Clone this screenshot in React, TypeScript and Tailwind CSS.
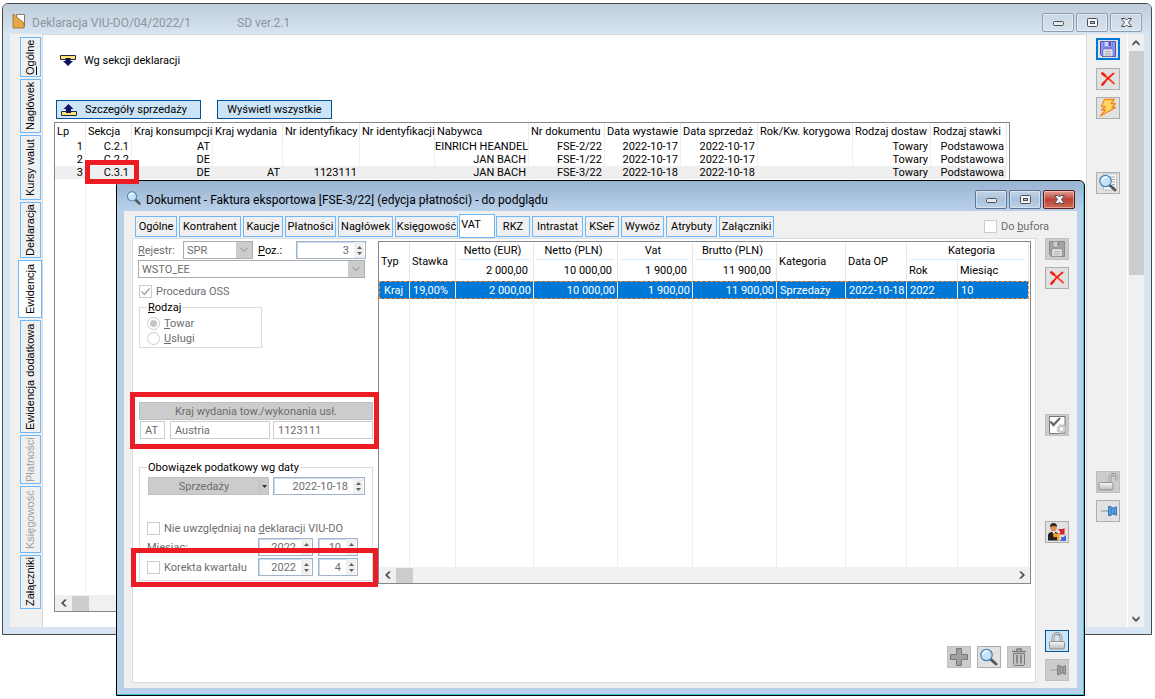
import { useState } from 'react'
import type { ReactNode } from 'react'
import clsx from 'clsx'

/* ---------- icons ---------- */

function SaveIcon({ gray }: { gray?: boolean }) {
    const dark = gray ? '#8a8a8a' : '#4f55b5'
    const mid = gray ? '#a3a3a3' : '#8f95ee'
    return (
        <svg className="h-[18px] w-[18px] shrink-0" viewBox="0 0 18 18" aria-hidden="true">
            <path d="M1.5 1.5h15v15h-13l-2-2z" fill={mid} stroke={dark} />
            <path d="M5 1.5h8v5.500h-8z" fill={gray ? '#d0d0d0' : '#c6d8ff'} stroke={dark} strokeWidth=".7" />
            <path d="M9.500 2h2.500v4h-2.500z" fill={dark} />
            <path d="M4 9h10v7.500h-10z" fill="#f7f7f7" stroke={dark} strokeWidth=".7" />
            <path d="M5.500 11.300h7M5.500 13.200h7M5.500 15h7" stroke="#9a9aa8" strokeWidth=".9" />
        </svg>
    )
}

function CancelIcon() {
    return (
        <svg className="h-[18px] w-[18px]" viewBox="0 0 18 18" aria-hidden="true">
            <path d="M3 3.500C7 6 11 10 15 13.500" stroke="#ff3d1f" strokeWidth="1.800" fill="none" strokeLinecap="round" />
            <path d="M14.500 3.500C11 6 7 10 3.500 14.500" stroke="#f01f10" strokeWidth="1.800" fill="none" strokeLinecap="round" />
            <path d="M3.500 3.500l2.500 2M3.500 14.500l1.800-2" stroke="#f01f10" strokeWidth="2.600" strokeLinecap="round" />
        </svg>
    )
}

function BoltIcon() {
    return (
        <svg className="h-5 w-5" viewBox="0 0 20 20" aria-hidden="true">
            <path
                d="M6.500 1.500h10l-3.500 4h4.500l-3.500 4h3.500L2.500 18l5-6H3.500l4-3.500H3.500z"
                fill="#ffd766"
                stroke="#f58a1d"
                strokeWidth="1.300"
                strokeLinejoin="round"
            />
        </svg>
    )
}

function LensIcon({ page, className = 'h-5 w-5' }: { page?: boolean; className?: string }) {
    return (
        <svg className={className} viewBox="0 0 20 20" aria-hidden="true">
            {page && (
                <>
                    <path d="M5.500 1h13v16h-13z" fill="#fafafa" stroke="#b5b5b5" strokeWidth=".8" />
                    <path d="M12 4h5M14 6.500h3M14 9h3M14 11.500h3M14 14h3" stroke="#a5a5a5" />
                </>
            )}
            <path d="M12 12.500l5 4.500" stroke="#555" strokeWidth="3" strokeLinecap="round" />
            <circle cx="7.500" cy="8" r="5.700" fill="#c5e4fa" stroke="#4d86b3" strokeWidth="1.300" />
            <path d="M4 7.500a3.700 3.700 0 0 1 5-3" stroke="#fff" strokeWidth="1.400" fill="none" />
        </svg>
    )
}

function LockIcon({ open }: { open?: boolean }) {
    const shackle = open ? 'M12 11V6a3.500 3.500 0 0 1 7 0v3' : 'M6 11V6.500a4 4 0 0 1 8 0V11'
    return (
        <svg className="h-5 w-5" viewBox="0 0 20 20" aria-hidden="true">
            <defs>
                <linearGradient id="metal" x1="0" y1="0" x2="0" y2="1">
                    <stop offset="0" stopColor="#fafafa" />
                    <stop offset="1" stopColor="#b9b9b9" />
                </linearGradient>
            </defs>
            <path d={shackle} fill="none" stroke="#8b8b8b" strokeWidth="2.800" />
            <path d={shackle} fill="none" stroke="#dedede" strokeWidth="1.200" />
            <rect x={open ? 1 : 2.5} y="10.500" width={open ? 14 : 15} height="7.500" rx="1.300" fill="url(#metal)" stroke="#8b8b8b" strokeWidth=".9" />
        </svg>
    )
}

function PinIcon({ gray }: { gray?: boolean }) {
    const dark = gray ? '#777' : '#2c6cb0'
    return (
        <svg className="h-5 w-5" viewBox="0 0 20 20" aria-hidden="true">
            <path d="M3 10h8" stroke={gray ? '#aaa' : '#9aa5ad'} strokeWidth="1.200" />
            <path d="M10.500 5.500h2.500l1 1.500h2l1-1h1.500v8h-1.500l-1-1h-2l-1 1.500h-2.500z" fill={gray ? '#a5a5a5' : '#5ba3e6'} stroke={dark} strokeWidth=".9" />
            <path d="M13 7v6M16 7v6" stroke={dark} strokeWidth=".8" />
        </svg>
    )
}

function CheckPageIcon() {
    return (
        <svg className="h-5 w-5" viewBox="0 0 20 20" aria-hidden="true">
            <path d="M2.500 1.500h15.500v17h-15.500z" fill="#fff" stroke="#777" />
            <path d="M3.500 6.500l3 3.500 6.500-7" fill="none" stroke="#666" strokeWidth="2.200" />
            <circle cx="14.500" cy="14" r="4" fill="#cfcfcf" stroke="#c2c2c2" strokeWidth="2.200" strokeDasharray="2 1.200" />
            <circle cx="14.500" cy="14" r="1.700" fill="#fff" />
        </svg>
    )
}

function PersonSwapIcon() {
    return (
        <svg className="h-5 w-5" viewBox="0 0 20 20" aria-hidden="true">
            <path d="M1 18.500v-5q0-3 3.500-3.500h4q3 .5 3 3.500v5z" fill="#25201f" />
            <path d="M5.500 10h2.500l-1 5z" fill="#fff" />
            <path d="M6.500 11h1l.3 5h-1.500z" fill="#c33" />
            <circle cx="6.500" cy="6" r="3.200" fill="#d98f5c" />
            <path d="M3 5q0-4 3.500-4t3.500 4q-2-2-7 0z" fill="#33251e" />
            <path d="M11 7h5l1.500-1v6.500h-5.500l1.500-2.500z" fill="#da1f1f" />
            <path d="M19 13v6h-6.500l2-2-1-2h3z" fill="#4469d4" />
            <path d="M6.500 12.500l3-2v1.500h3v6h-2.500v-3h-3z" fill="#f3a51d" />
        </svg>
    )
}

function PlusIcon() {
    return (
        <svg className="h-5 w-5" viewBox="0 0 20 20" aria-hidden="true">
            <path d="M7.500 1.500h5v6h6v5h-6v6h-5v-6h-6v-5h6z" fill="#a0a0a0" stroke="#777" />
        </svg>
    )
}

function TrashIcon() {
    return (
        <svg className="h-5 w-5" viewBox="0 0 20 20" aria-hidden="true">
            <path d="M4.500 6.500h11v11l-1 1h-9l-1-1z" fill="#c2c2c2" stroke="#7b7b7b" />
            <path d="M3 4.500h14M8 4v-2h4v2" fill="none" stroke="#7b7b7b" strokeWidth="1.600" />
            <path d="M8 8v8.500M12 8v8.500" stroke="#777" strokeWidth="1.500" />
        </svg>
    )
}

function TableArrow({ up }: { up?: boolean }) {
    return (
        <svg className="h-3 w-4 shrink-0" viewBox="0 0 16 12" aria-hidden="true">
            {up ? (
                <>
                    <path d="M.5 7.500h15v4h-15z" fill="#ffe36e" stroke="#222a4a" />
                    <path d="M7.500 0l5 5h-2.500v4h-5v-4h-2.500z" fill="#14125f" />
                </>
            ) : (
                <>
                    <path d="M.5 1.500h15v4h-15z" fill="#ffe36e" stroke="#222a4a" />
                    <path d="M5.500 4h5v3h2.500l-5 5-5-5h2.500z" fill="#14125f" />
                </>
            )}
        </svg>
    )
}

function Chevron({ dir, color = '#505050' }: { dir: 'up' | 'down' | 'left' | 'right'; color?: string }) {
    const paths = {
        up: 'M1.500 5.500L5 2l3.500 3.500v2.500L5 4.500 1.500 8z',
        down: 'M1.500 4.500L5 8l3.500-3.500V2L5 5.500 1.500 2z',
        left: 'M5.500 1.500L2 5l3.500 3.500h2.500L4.500 5 8 1.500z',
        right: 'M4.500 1.500L8 5l-3.500 3.500H2L5.500 5 2 1.500z',
    }
    return (
        <svg className="h-[10px] w-[10px]" viewBox="0 0 10 10" aria-hidden="true">
            <path d={paths[dir]} fill={color} />
        </svg>
    )
}

/* ---------- controls ---------- */

function WindowButtons({ active }: { active?: boolean }) {
    const base = 'flex h-[19px] w-8 items-center justify-center rounded-[2px] border inset-shadow-[0_0_0_1px_rgba(255,255,255,0.4)]'
    const normal = active
        ? 'border-[#5f7590] bg-linear-to-b from-[#c3d5e8] via-[#a9c1dc] to-[#bcd3ea]'
        : 'border-[#8d9db4] bg-linear-to-b from-[#cbd7e3] to-[#d6e2ee]'
    return (
        <div className="flex gap-[2px]">
            <button type="button" aria-label="Minimalizuj" className={clsx(base, normal)}>
                <svg className="h-[11px] w-[13px]" viewBox="0 0 13 11"><rect x="1.500" y="4.500" width="10" height="4" rx="1" fill="#e8e8e8" stroke="#4b4e58" /></svg>
            </button>
            <button type="button" aria-label="Maksymalizuj" className={clsx(base, normal)}>
                <svg className="h-[11px] w-[13px]" viewBox="0 0 13 11">
                    <rect x="1.500" y="1.500" width="10" height="8" rx="1" fill="#f4f4f4" stroke="#4b4e58" />
                    <rect x="4.500" y="4.500" width="4" height="2" fill="#aebfd2" stroke="#4b4e58" />
                </svg>
            </button>
            <button type="button" aria-label="Zamknij" className={clsx(base, active ? 'border-[#5b1a1a] bg-linear-to-b from-[#e0a095] via-[#bd4232] to-[#cf6a52]' : normal)}>
                <svg className="h-[11px] w-[13px]" viewBox="0 0 13 11">
                    <path d="M1.500 1.500h3.500l1.500 1.500 1.500-1.500h3.500l-3 4 3 4h-3.500l-1.500-1.500-1.500 1.500h-3.500l3-4z" fill="#f4f4f4" stroke="#4b4e58" />
                </svg>
            </button>
        </div>
    )
}

const tones = {
    normal: 'border border-[#adadad] bg-[#e1e1e1]',
    disabled: 'border border-[#bfbfbf] bg-[#cccccc]',
    focus: 'border-2 border-[#0078d7] bg-[#e1e1e1]',
    hot: 'border border-[#005499] bg-[#cce4f7]',
}

function ToolButton({ label, children, className, tone = 'normal' }: { label: string; children: ReactNode; className?: string; tone?: keyof typeof tones }) {
    return (
        <button
            type="button"
            aria-label={label}
            disabled={tone === 'disabled'}
            className={clsx('flex h-[22px] w-6 shrink-0 items-center justify-center', tones[tone], className)}
        >
            {children}
        </button>
    )
}

function Combo({ id, value, className }: { id: string; value: string; className?: string }) {
    return (
        <span className={clsx('flex h-[18px] border border-[#acacac] bg-white', className)}>
            <select id={id} aria-label={id} disabled defaultValue={value} className="min-w-0 flex-1 appearance-none bg-white pl-[3px] text-[#6d6d6d] opacity-100">
                <option>{value}</option>
            </select>
            <span className="flex w-4 items-center justify-center bg-[#cccccc]">
                <svg className="h-2 w-[10px]" viewBox="0 0 10 8"><path d="M1.500 2L5 5.500 8.500 2" fill="none" stroke="#8c8c8c" /></svg>
            </span>
        </span>
    )
}

function Spin({ id, value, className }: { id: string; value: string; className?: string }) {
    return (
        <span className={clsx('flex h-[18px] border border-[#a5b3c7] bg-white inset-shadow-[1px_1px_0_#c5daf3]', className)}>
            <input id={id} aria-label={id} readOnly defaultValue={value} className="w-0 min-w-0 flex-1 bg-transparent pr-[5px] text-right text-[#6d6d6d] outline-none" />
            <span className="mr-px flex w-[10px] flex-col items-center justify-center gap-[3px] bg-[#f0f0f0]">
                <svg className="h-[3px] w-[5px]" viewBox="0 0 5 3"><path d="M2.500 0L5 3H0z" fill="#606060" /></svg>
                <svg className="h-[3px] w-[5px]" viewBox="0 0 5 3"><path d="M2.500 3L5 0H0z" fill="#606060" /></svg>
            </span>
        </span>
    )
}

function Check({ checked, children }: { checked?: boolean; children: ReactNode }) {
    return (
        <label className="flex items-center gap-1 text-[#6d6d6d]">
            <span className="grid shrink-0">
                <input type="checkbox" disabled defaultChecked={checked} className="col-start-1 row-start-1 h-[13px] w-[13px] appearance-none border border-[#cccccc] bg-white" />
                {checked && (
                    <svg className="col-start-1 row-start-1 h-[13px] w-[13px]" viewBox="0 0 13 13">
                        <path d="M2.500 6.500l3 3 5-6" fill="none" stroke="#a5a5a5" strokeWidth="1.500" />
                    </svg>
                )}
            </span>
            <span className="whitespace-nowrap">{children}</span>
        </label>
    )
}

function Radio({ checked, children }: { checked?: boolean; children: ReactNode }) {
    return (
        <label className="flex h-[15px] items-center gap-1 text-[#6d6d6d]">
            <span className="grid shrink-0">
                <input type="radio" name="rodzaj" disabled defaultChecked={checked} className="col-start-1 row-start-1 h-[13px] w-[13px] appearance-none rounded-full border border-[#cccccc] bg-white" />
                {checked && <span className="col-start-1 row-start-1 m-[3px] rounded-full bg-[#c4c4c4]" />}
            </span>
            <span>{children}</span>
        </label>
    )
}

/* ---------- declaration window ---------- */

const sideTabs = [
    { name: 'Ogólne', className: 'h-[40px]' },
    { name: 'Nagłówek', className: 'h-[54px]' },
    { name: 'Kursy walut', className: 'h-[65px]' },
    { name: 'Deklaracja', className: 'h-[56px]' },
    { name: 'Ewidencja', className: 'h-[58px]' },
    { name: 'Ewidencja dodatkowa', className: 'h-[113px]' },
    { name: 'Płatności', className: 'h-[49px]', disabled: true },
    { name: 'Księgowość', className: 'h-[67px]', disabled: true },
    { name: 'Załączniki', className: 'h-[54px]' },
]

const salesColumns = [
    { name: 'Lp', w: 'w-[31px]' },
    { name: 'Sekcja', w: 'w-[46px]' },
    { name: 'Kraj konsumpcji', w: 'w-[81px]' },
    { name: 'Kraj wydania', w: 'w-[70px]' },
    { name: 'Nr identyfikacy', w: 'w-[77px]' },
    { name: 'Nr identyfikacji', w: 'w-[75px]' },
    { name: 'Nabywca', w: 'w-[94px]' },
    { name: 'Nr dokumentu', w: 'w-[76px]' },
    { name: 'Data wystawie', w: 'w-[76px]' },
    { name: 'Data sprzedaż', w: 'w-[77px]' },
    { name: 'Rok/Kw. korygowa', w: 'w-[95px]' },
    { name: 'Rodzaj dostaw', w: 'w-[78px]' },
    { name: 'Rodzaj stawki', w: '' },
]

const salesRows = [
    ['1', 'C.2.1', 'AT', '', '', '', 'EINRICH HEANDEL', 'FSE-2/22', '2022-10-17', '2022-10-17', '', 'Towary', 'Podstawowa'],
    ['2', 'C.2.2', 'DE', '', '', '', 'JAN BACH', 'FSE-1/22', '2022-10-17', '2022-10-17', '', 'Towary', 'Podstawowa'],
    ['3', 'C.3.1', 'DE', 'AT', '1123111', '', 'JAN BACH', 'FSE-3/22', '2022-10-18', '2022-10-18', '', 'Towary', 'Podstawowa'],
]

function SalesTable() {
    return (
        <div className="mr-[76px] mt-[3px] flex min-h-0 flex-1 flex-col border border-[#828790]">
            <div className="min-h-0 flex-1 pr-[2px]">
                <table className="h-full w-full table-fixed border-separate border-spacing-0">
                    <thead>
                        <tr className="h-[17px]">
                            {salesColumns.map((c) => (
                                <th key={c.name} className={clsx('whitespace-nowrap border-r border-[#e8e8e8] p-0 pl-[2px] text-left font-normal', c.w)}>
                                    {c.name}
                                </th>
                            ))}
                        </tr>
                    </thead>
                    <tbody>
                        {salesRows.map((row, i) => (
                            <tr key={row[0]} className={clsx('h-[13px]', i === 2 && 'bg-[#efefef]')}>
                                {row.map((cell, j) => (
                                    <td key={j} className="whitespace-nowrap border-r border-[#efefef] p-0 pr-[2px] text-right">
                                        {cell}
                                    </td>
                                ))}
                            </tr>
                        ))}
                        <tr className="h-full">
                            {salesColumns.map((c) => (
                                <td key={c.name} className="border-r border-[#efefef] p-0" />
                            ))}
                        </tr>
                    </tbody>
                </table>
            </div>
            <div className="flex h-4 items-center bg-[#f0f0f0]">
                <span className="flex w-[17px] justify-center"><Chevron dir="left" /></span>
                <span className="h-[15px] w-[17px] bg-[#cdcdcd]" />
            </div>
        </div>
    )
}

function DeclarationWindow() {
    const [tab, setTab] = useState('Ewidencja')

    return (
        <section className="absolute top-[3px] right-[3px] bottom-16 left-[2px] flex flex-col rounded-t-[6px] border border-[#4a4a4a] bg-[#d7e4f2] px-[7px] pb-[7px]">
            <header className="-mx-[7px] flex h-[30px] shrink-0 items-center rounded-t-[5px] bg-linear-to-b from-[#bfcddb] to-[#d7e4f2] pr-[9px] pl-[9px] text-[12px] text-[#8e9499]">
                <svg className="mt-1 h-4 w-[14px]" viewBox="0 0 14 16" aria-hidden="true">
                    <path d="M4.500 1.500h8v12h-8z" fill="#fff" stroke="#8c7a60" />
                    <path d="M1 1l11 9v5H1z" fill="#e5a84a" stroke="#9a6a20" strokeWidth=".8" />
                </svg>
                <h1 className="mt-2 ml-[6px] w-[205px]">Deklaracja VIU-DO/04/2022/1</h1>
                <span className="mt-2 flex-1">SD ver.2.1</span>
                <div className="mt-[6px]"><WindowButtons /></div>
            </header>
            <div className="flex min-h-0 flex-1 bg-[#f0f0f0]">
                <nav className="flex w-8 flex-col items-end gap-[2px] pt-[3px] pr-px font-['Liberation_Sans',Arial,sans-serif]">
                    {sideTabs.map((t) => (
                        <button
                            key={t.name}
                            type="button"
                            disabled={t.disabled}
                            onClick={() => setTab(t.name)}
                            className={clsx(
                                'flex shrink-0 rotate-180 items-center justify-center border border-[#6bb8fb] whitespace-nowrap [writing-mode:vertical-rl]',
                                t.className,
                                tab === t.name ? '-my-px -mr-px w-6 bg-white' : 'w-[21px]',
                                t.disabled && 'text-[#a0a0a0]',
                            )}
                        >
                            {t.name === 'Ogólne' ? <span><u>O</u>gólne</span> : t.name}
                        </button>
                    ))}
                </nav>
                <main className="flex min-w-0 flex-1 flex-col border-x border-t border-[#d9d9d9] bg-white pt-[18px] pb-[15px] pl-[11px]">
                    <div className="flex h-[14px] items-center gap-2 pl-[6px]">
                        <TableArrow />
                        <span>Wg sekcji deklaracji</span>
                    </div>
                    <div className="mt-[33px] flex gap-4 pl-[2px]">
                        <button type="button" className="flex h-[19px] w-[145px] items-center gap-2 border border-[#005499] bg-[#cce4f7] pl-1">
                            <TableArrow up />
                            Szczegóły sprzedaży
                        </button>
                        <button type="button" className="h-[19px] w-[115px] border border-[#005499] bg-[#cce4f7]">Wyświetl wszystkie</button>
                    </div>
                    <SalesTable />
                </main>
                <aside className="flex w-[41px] flex-col items-end border-r border-white pt-1 pr-[7px]">
                    <ToolButton label="Zapisz" tone="focus"><SaveIcon /></ToolButton>
                    <ToolButton label="Anuluj" className="mt-2"><CancelIcon /></ToolButton>
                    <ToolButton label="Przelicz" className="mt-[7px]"><BoltIcon /></ToolButton>
                    <ToolButton label="Podgląd" className="mt-[53px]"><LensIcon page /></ToolButton>
                    <ToolButton label="Odblokuj" tone="disabled" className="mt-[277px]"><LockIcon open /></ToolButton>
                    <ToolButton label="Przypnij" className="mt-[7px]"><PinIcon /></ToolButton>
                </aside>
                <div className="flex w-4 flex-col items-center bg-[#f0f0f0]">
                    <span className="flex h-[17px] items-center"><Chevron dir="up" /></span>
                    <span className="h-56 w-[15px] bg-[#cdcdcd]" />
                    <span className="mt-auto flex h-[17px] items-center"><Chevron dir="down" /></span>
                </div>
            </div>
        </section>
    )
}

/* ---------- document window ---------- */

const documentTabs = [
    { name: 'Ogólne', w: 'w-[42px]' },
    { name: 'Kontrahent', w: 'w-[62px]' },
    { name: 'Kaucje', w: 'w-[40px]' },
    { name: 'Płatności', w: 'w-[51px]' },
    { name: 'Nagłówek', w: 'w-[55px]' },
    { name: 'Księgowość', w: 'w-[63px]' },
    { name: 'VAT', w: 'w-[36px]' },
    { name: 'RKZ', w: 'w-[34px]' },
    { name: 'Intrastat', w: 'w-[51px]' },
    { name: 'KSeF', w: 'w-[34px]' },
    { name: 'Wywóz', w: 'w-[43px]' },
    { name: 'Atrybuty', w: 'w-[51px]' },
    { name: 'Załączniki', w: 'w-[55px]' },
]

const amounts = [
    { name: 'Netto (EUR)', sum: '2 000,00' },
    { name: 'Netto (PLN)', sum: '10 000,00' },
    { name: 'Vat', sum: '1 900,00' },
    { name: 'Brutto (PLN)', sum: '11 900,00' },
]

const vatRow = ['Kraj', '19,00%', '2 000,00', '10 000,00', '1 900,00', '11 900,00', 'Sprzedaży', '2022-10-18', '2022', '10']

function VatTable() {
    const th = 'border-r border-[#e8e8e8] p-0 font-normal'
    return (
        <div className="mt-[2px] mr-1 flex h-[343px] min-w-0 flex-1 flex-col border border-[#828790] bg-white">
            <div className="min-h-0 flex-1 pr-px">
                <table className="h-full w-full table-fixed border-separate border-spacing-0">
                    <colgroup>
                        <col className="w-[31px]" />
                        <col className="w-[46px]" />
                        <col className="w-[78px]" />
                        <col className="w-[84px]" />
                        <col className="w-[75px]" />
                        <col className="w-[84px]" />
                        <col className="w-[69px]" />
                        <col className="w-[61px]" />
                        <col className="w-[51px]" />
                        <col />
                    </colgroup>
                    <thead>
                        <tr className="h-[19px]">
                            <th rowSpan={2} className={clsx(th, 'pl-[2px] text-left')}>Typ</th>
                            <th rowSpan={2} className={clsx(th, 'pl-[2px] text-left')}>Stawka</th>
                            {amounts.map((a) => (
                                <th key={a.name} className={clsx(th, 'px-[3px]')}>
                                    <div className="border-b border-[#d5e8fa] pr-1 pb-[2px]">{a.name}</div>
                                </th>
                            ))}
                            <th rowSpan={2} className={clsx(th, 'pl-[2px] text-left')}>Kategoria</th>
                            <th rowSpan={2} className={clsx(th, 'pl-[2px] text-left')}>Data OP</th>
                            <th colSpan={2} className={clsx(th, 'px-[3px]')}>
                                <div className="border-b border-[#d5e8fa] pb-[2px] pl-2">Kategoria</div>
                            </th>
                        </tr>
                        <tr className="h-5">
                            {amounts.map((a) => (
                                <th key={a.name} className={clsx(th, 'pr-[5px] pb-[2px] text-right')}>{a.sum}</th>
                            ))}
                            <th className={clsx(th, 'pb-[2px] pl-[2px] text-left')}>Rok</th>
                            <th className={clsx(th, 'pb-[2px] pl-[2px] text-left')}>Miesiąc</th>
                        </tr>
                    </thead>
                    <tbody>
                        <tr className="h-[18px] bg-[#0078d7] text-white outline outline-dashed -outline-offset-1 outline-[#ff8728]">
                            {vatRow.map((cell, i) => (
                                <td key={i} className={clsx('whitespace-nowrap border-r border-[#efefef] p-0', i > 1 && i < 6 ? 'pr-[2px] text-right' : i === 0 ? 'pl-[5px]' : 'pl-[3px]')}>
                                    {cell}
                                </td>
                            ))}
                        </tr>
                        <tr className="h-full">
                            {vatRow.map((_, i) => (
                                <td key={i} className="border-r border-[#efefef] p-0" />
                            ))}
                        </tr>
                    </tbody>
                </table>
            </div>
            <div className="flex h-4 items-center bg-[#f0f0f0]">
                <span className="flex w-[17px] justify-center"><Chevron dir="left" /></span>
                <span className="h-[15px] w-[17px] bg-[#cdcdcd]" />
                <span className="ml-auto flex w-[17px] justify-center"><Chevron dir="right" /></span>
            </div>
        </div>
    )
}

function VatForm() {
    const field = 'h-[18px] min-w-0 border border-[#cccccc] bg-white px-1 text-[#6d6d6d]'
    return (
        <form className="w-[245px] shrink-0 pt-[2px] pl-[5px]">
            <div className="flex h-[18px] items-center">
                <label htmlFor="rejestr" className="w-[45px] text-[#6d6d6d]"><u>R</u>ejestr:</label>
                <Combo id="rejestr" value="SPR" className="w-[70px]" />
                <label htmlFor="poz" className="w-[43px] pl-[5px]"><u>P</u>oz.:</label>
                <Spin id="poz" value="3" className="w-[70px]" />
            </div>
            <div className="mt-px flex">
                <Combo id="rodzaj-transakcji" value="WSTO_EE" className="w-[227px]" />
            </div>
            <div className="mt-[7px] pl-px">
                <Check checked>Procedura OSS</Check>
            </div>
            <fieldset className="mt-[3px] ml-px h-[47px] w-[123px] border border-[#dcdcdc] pl-[7px]">
                <legend className="px-px"><u>R</u>odzaj</legend>
                <div className="pt-[2px]">
                    <Radio checked><u>T</u>owar</Radio>
                    <Radio><u>U</u>sługi</Radio>
                </div>
            </fieldset>
            <div className="mt-[54px] mr-[5px] ml-px">
                <button type="button" disabled className="h-[18px] w-full border border-[#bfbfbf] bg-[#cccccc] text-[#6d6d6d]">Kraj wydania tow./wykonania usł.</button>
                <div className="mt-px flex pl-px">
                    <input aria-label="Kod kraju" readOnly defaultValue="AT" className={clsx(field, 'w-[25px]')} />
                    <input aria-label="Kraj" readOnly defaultValue="Austria" className={clsx(field, 'ml-[5px] w-[100px]')} />
                    <input aria-label="Numer" readOnly defaultValue="1123111" className={clsx(field, 'ml-[3px] flex-1')} />
                </div>
            </div>
            <fieldset className="mt-[22px] mr-[6px] ml-px h-[120px] border border-[#dcdcdc] px-[7px]">
                <legend className="px-px">Obowiązek podatkowy wg daty</legend>
                <div className="mt-[3px] flex pl-px">
                    <button type="button" disabled className="h-[18px] w-[112px] border border-[#bfbfbf] bg-[#cccccc] text-[#6d6d6d]">Sprzedaży</button>
                    <button type="button" disabled aria-label="Rozwiń" className="flex h-[18px] w-[9px] items-center justify-center border-y border-r border-[#bfbfbf] bg-[#cccccc]">
                        <svg className="h-[3px] w-[5px]" viewBox="0 0 5 3"><path d="M0 0h5L2.500 3z" fill="#333" /></svg>
                    </button>
                    <Spin id="data" value="2022-10-18" className="ml-1 w-[92px]" />
                </div>
                <div className="mt-[27px]"><Check>Nie uwzględniaj na <u>d</u>eklaracji VIU-DO</Check></div>
                <div className="mt-[3px] flex items-center">
                    <label htmlFor="rok" className="w-[111px] text-[#6d6d6d]">Miesiąc:</label>
                    <Spin id="rok" value="2022" className="w-[55px]" />
                    <Spin id="miesiac" value="10" className="ml-[5px] w-[40px]" />
                </div>
                <div className="mt-[2px] flex items-center">
                    <div className="w-[111px]"><Check>Korekta kwartału</Check></div>
                    <Spin id="rok-korekty" value="2022" className="w-[55px]" />
                    <Spin id="kwartal" value="4" className="ml-[5px] w-[40px]" />
                </div>
            </fieldset>
        </form>
    )
}

function DocumentWindow() {
    const [tab, setTab] = useState('VAT')

    return (
        <section className="absolute top-[180px] right-[70px] bottom-[3px] left-[116px] flex flex-col rounded-t-[6px] border border-black bg-[#b9d1ea] px-[7px] pb-[7px] inset-shadow-[-1px_-1px_0_#3fc1d8]">
            <header className="-ml-[7px] -mr-[6px] flex h-[30px] shrink-0 items-center rounded-t-[5px] bg-linear-to-b from-[#99b4d1] to-[#b9d1ea] pr-[8px] pl-[9px] text-[12px]">
                <LensIcon className="mt-1 h-4 w-4" />
                <h2 className="mt-2 ml-1 flex-1 truncate">Dokument - Faktura eksportowa [FSE-3/22] (edycja płatności) - do podglądu</h2>
                <div className="mt-[6px]"><WindowButtons active /></div>
            </header>
            <div className="flex min-h-0 flex-1 bg-[#f0f0f0] pb-[5px] pl-2">
                <div className="flex min-w-0 flex-1 flex-col">
                    <nav className="flex h-[27px] items-center gap-[2px] pt-[4px] pb-px pl-[3px]">
                        {documentTabs.map((t) => (
                            <button
                                key={t.name}
                                type="button"
                                onClick={() => setTab(t.name)}
                                className={clsx(
                                    'shrink-0 border border-[#6bb8fb] whitespace-nowrap',
                                    t.w,
                                    tab === t.name ? '-mx-px h-6 bg-white pr-3 pb-1' : 'h-[21px]',
                                )}
                            >
                                {t.name}
                            </button>
                        ))}
                    </nav>
                    <div className="flex min-h-0 flex-1 flex-col border border-[#dcdcdc] bg-white">
                        <div className="flex">
                            <VatForm />
                            <VatTable />
                        </div>
                        <div className="mt-auto mr-1 mb-[14px] flex justify-end gap-[6px]">
                            <ToolButton label="Dodaj" tone="disabled"><PlusIcon /></ToolButton>
                            <ToolButton label="Pokaż"><LensIcon /></ToolButton>
                            <ToolButton label="Usuń" tone="disabled"><TrashIcon /></ToolButton>
                        </div>
                    </div>
                </div>
                <aside className="flex w-[41px] flex-col items-end pr-2">
                    <div className="mt-[9px] flex h-[13px] w-[100px] justify-end pr-[20px]">
                        <Check>Do <u>b</u>ufora</Check>
                    </div>
                    <ToolButton label="Zapisz" tone="disabled" className="mt-[5px]"><SaveIcon gray /></ToolButton>
                    <ToolButton label="Anuluj" className="mt-[7px]"><CancelIcon /></ToolButton>
                    <ToolButton label="Sprawdź" tone="disabled" className="mt-[125px]"><CheckPageIcon /></ToolButton>
                    <ToolButton label="Zmień kontrahenta" className="mt-[85px]"><PersonSwapIcon /></ToolButton>
                    <ToolButton label="Zablokuj" tone="hot" className="mt-[87px]"><LockIcon /></ToolButton>
                    <ToolButton label="Przypnij" tone="disabled" className="mt-[7px]"><PinIcon gray /></ToolButton>
                </aside>
            </div>
        </section>
    )
}

export default function App() {
    return (
        <div className="relative h-screen min-h-[699px] overflow-hidden bg-white font-['Roboto','Noto_Sans',sans-serif] text-[11px] leading-[13px] text-black">
            <DeclarationWindow />
            <DocumentWindow />

            {/* red marks over both windows */}
            <div className="pointer-events-none absolute top-[160px] left-[85px] h-6 w-[54px] border-5 border-[#ed1c24]" />
            <div className="pointer-events-none absolute top-[392px] left-[130px] h-[57px] w-[249px] border-5 border-[#ed1c24]" />
            <div className="pointer-events-none absolute top-[548px] left-[131px] h-[39px] w-[247px] border-5 border-[#ed1c24]" />
        </div>
    )
}
